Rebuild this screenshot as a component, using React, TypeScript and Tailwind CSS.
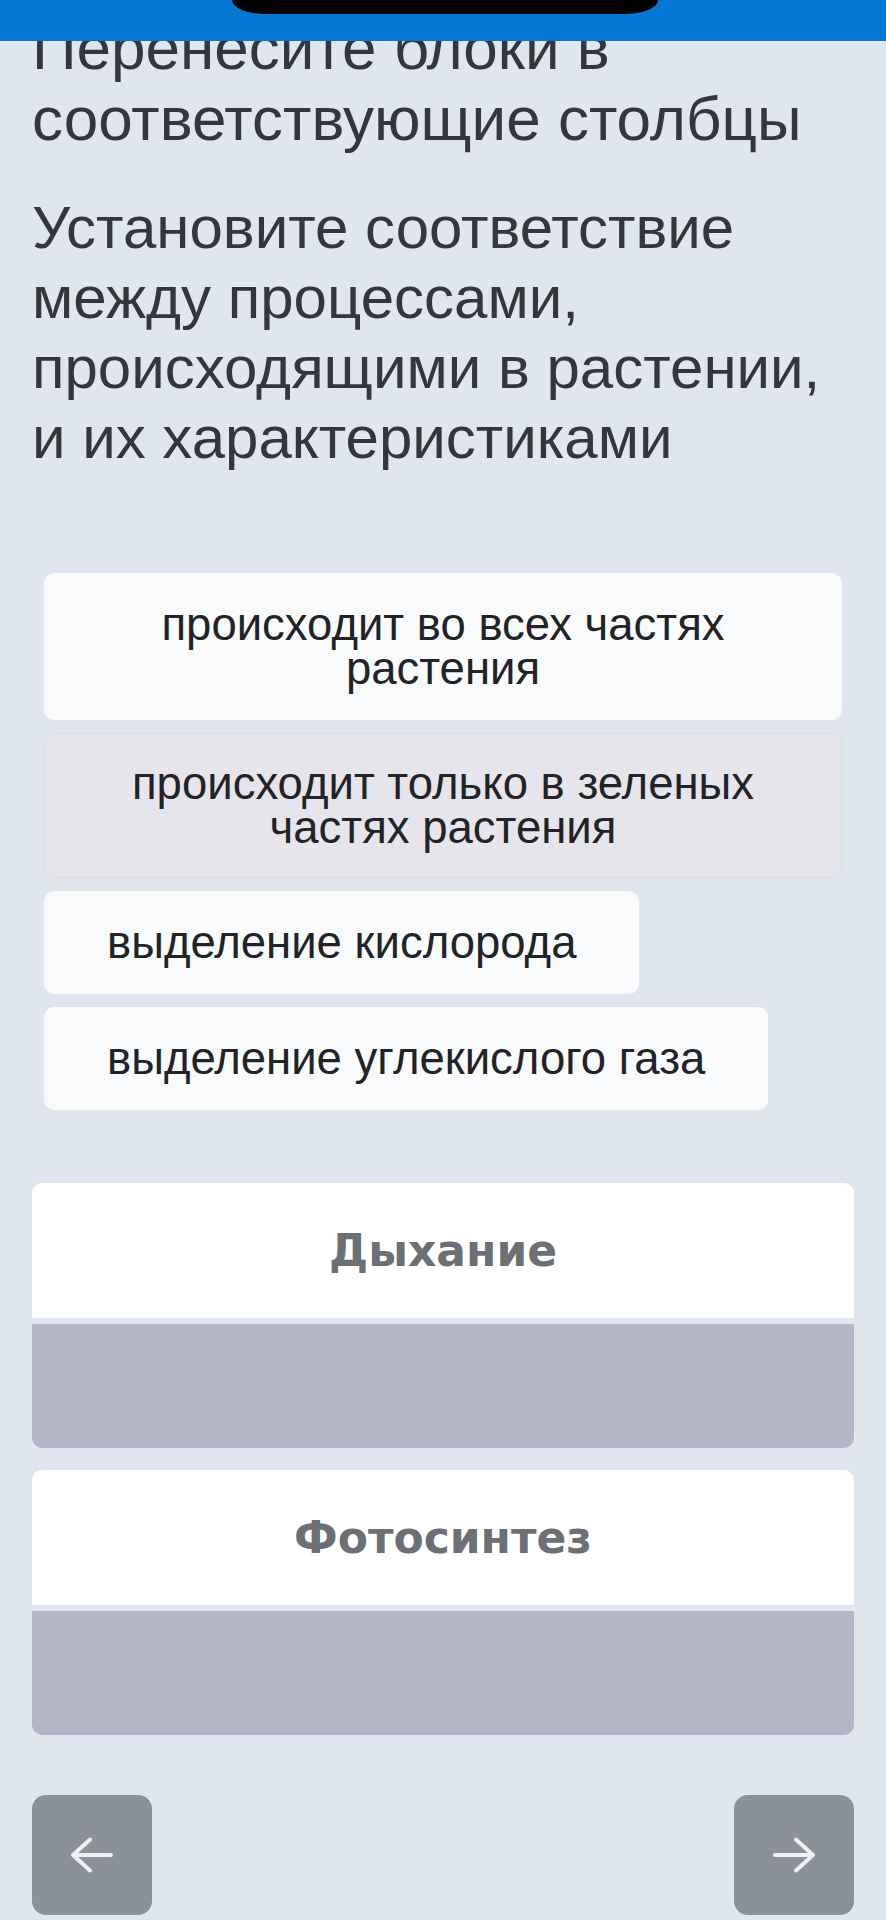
const CARDS = [
  { text: "происходит во всех частях растения", active: false },
  { text: "происходит только в зеленых частях растения", active: true },
  { text: "выделение кислорода", active: false },
  { text: "выделение углекислого газа", active: false },
];

const COLUMNS = ["Дыхание", "Фотосинтез"];

function Arrow({ flip }: { flip?: boolean }) {
  return (
    <svg
      width="44"
      height="36"
      viewBox="0 0 44 36"
      fill="none"
      className={flip ? "-scale-x-100" : ""}
    >
      <path
        d="M20 2.5L3 18L20 33.5M3 18H41"
        stroke="#eef1f4"
        strokeWidth="4"
        strokeLinecap="round"
        strokeLinejoin="round"
      />
    </svg>
  );
}

export default function App() {
  return (
    <div
      className="relative min-h-[1920px] bg-[#dfe6ed] overflow-hidden"
      style={{ fontFamily: '"Liberation Sans", Arial, sans-serif' }}
    >
      {/* status bar overlay */}
      <div className="absolute top-0 left-0 right-0 h-[41px] bg-[#0477d5] z-10">
        <div className="absolute top-0 left-[232px] w-[426px] h-[14px] bg-black rounded-b-[34px_14px]" />
      </div>

      <div className="px-8 pt-[12px]">
        <h1 className="text-[62px] leading-[71px] text-[#32373c] font-normal">
          Перенесите блоки в соответствующие столбцы
        </h1>
        <p className="mt-[39px] text-[60px] leading-[70px] text-[#32373c]">
          Установите соответствие между процессами, происходящими в растении, и
          их характеристиками
        </p>

        {/* draggable answers */}
        <div className="mt-[100px] mx-3 flex flex-col items-start gap-[13px]">
          {CARDS.map((c) => (
            <div
              key={c.text}
              className={`max-w-full rounded-[10px] px-[63px] text-center text-[45.5px] leading-[44px] text-[#212327] ${
                c.active
                  ? "bg-[#e5e5eb] border border-[#dcdde4] py-[27.5px]"
                  : "bg-[#f9fafc] py-[29.5px]"
              }`}
            >
              {c.text}
            </div>
          ))}
        </div>

        {/* target columns */}
        <div className="mt-[73px] flex flex-col gap-[22px]">
          {COLUMNS.map((name) => (
            <div key={name} className="flex flex-col gap-[6px]">
              <div className="h-[135px] rounded-t-[10px] bg-white flex items-center justify-center">
                <span
                  className="text-[44px] font-bold text-[#6c6f74]"
                  style={{ fontFamily: '"DejaVu Sans", sans-serif' }}
                >
                  {name}
                </span>
              </div>
              <div className="h-[124px] rounded-b-[10px] bg-[#b5b5c8]" />
            </div>
          ))}
        </div>

        {/* navigation */}
        <div className="mt-[60px] flex justify-between">
          <button className="w-[120px] h-[120px] rounded-[14px] bg-[#8a9199] flex items-center justify-center">
            <Arrow />
          </button>
          <button className="w-[120px] h-[120px] rounded-[14px] bg-[#8a9199] flex items-center justify-center">
            <Arrow flip />
          </button>
        </div>
      </div>
    </div>
  );
}
